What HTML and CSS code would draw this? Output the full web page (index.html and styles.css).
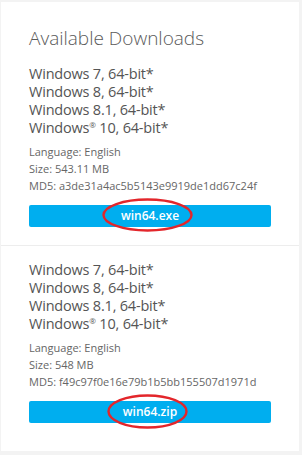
FILE: index.html
```html
<!DOCTYPE html>
<html lang="en">
<head>
    <meta charset="UTF-8">
    <meta name="viewport" content="width=device-width, initial-scale=1.0">
    <title>Available Downloads</title>
    <link rel="stylesheet" href="styles.css">
</head>

<body>
    <div id="panel">
        <div class="download first">
            <h2 class="title">Available Downloads</h2>
            <ul class="os-list">
                <li>Windows 7, 64-bit*</li>
                <li>Windows 8, 64-bit*</li>
                <li>Windows 8.1, 64-bit*</li>
                <li>Windows<sup>®</sup> 10, 64-bit*</li>
            </ul>
            <div class="meta">
                <div>Language: English</div>
                <div>Size: 543.11 MB</div>
                <div>MD5: a3de31a4ac5b5143e9919de1dd67c24f</div>
            </div>
            <div class="btn-wrap">
                <a class="btn" href="#">win64.exe</a>
                <svg class="circle c1" width="91" height="34" viewBox="0 0 91 34"><ellipse cx="45.5" cy="17" rx="44" ry="15.5" fill="none" stroke="#e3262b" stroke-width="2.4"/></svg>
            </div>
        </div>
        <div class="download">
            <ul class="os-list">
                <li>Windows 7, 64-bit*</li>
                <li>Windows 8, 64-bit*</li>
                <li>Windows 8.1, 64-bit*</li>
                <li>Windows<sup>®</sup> 10, 64-bit*</li>
            </ul>
            <div class="meta">
                <div>Language: English</div>
                <div>Size: 548 MB</div>
                <div>MD5: f49c97f0e16e79b1b5bb155507d1971d</div>
            </div>
            <div class="btn-wrap">
                <a class="btn" href="#">win64.zip</a>
                <svg class="circle c2" width="81" height="35" viewBox="0 0 81 35"><ellipse cx="40.5" cy="17.5" rx="39" ry="16" fill="none" stroke="#e3262b" stroke-width="2.4"/></svg>
            </div>
        </div>
    </div>
</body>

</html>
```

FILE: styles.css
```css
body{
  margin: 0;
  background-color: #f3f3f3;
  font-family: 'Open Sans', 'Liberation Sans', sans-serif;
  color: #555;
}
#panel{
  margin: 2px 3px 3px 1px;
  background-color: #fff;
}
.download{
  padding: 15px 28px 28px;
}
.download.first{
  padding-top: 24px;
  padding-bottom: 18px;
  border-bottom: 1px solid #ededed;
}
.title{
  margin: 0 0 14px;
  font-size: 19px;
  line-height: 25px;
  font-weight: 300;
  color: #5a5a5a;
}
.os-list{
  margin: 0;
  padding: 0;
  list-style: none;
  font-size: 14.5px;
  line-height: 18px;
  letter-spacing: -0.2px;
}
.os-list sup{
  font-size: 8px;
  line-height: 0;
  vertical-align: 5px;
}
.meta{
  margin-top: 6px;
  font-size: 11px;
  line-height: 17px;
  color: #666;
}
.btn-wrap{
  position: relative;
  margin-top: 11px;
}
.btn{
  display: block;
  height: 22px;
  line-height: 22px;
  background-color: #00aeef;
  color: #fff;
  text-align: center;
  text-decoration: none;
  font-size: 12px;
  font-weight: 600;
  border-radius: 2px;
}
.circle{
  position: absolute;
  top: -7px;
}
.c1{
  left: 73px;
}
.c2{
  left: 78px;
}
```
